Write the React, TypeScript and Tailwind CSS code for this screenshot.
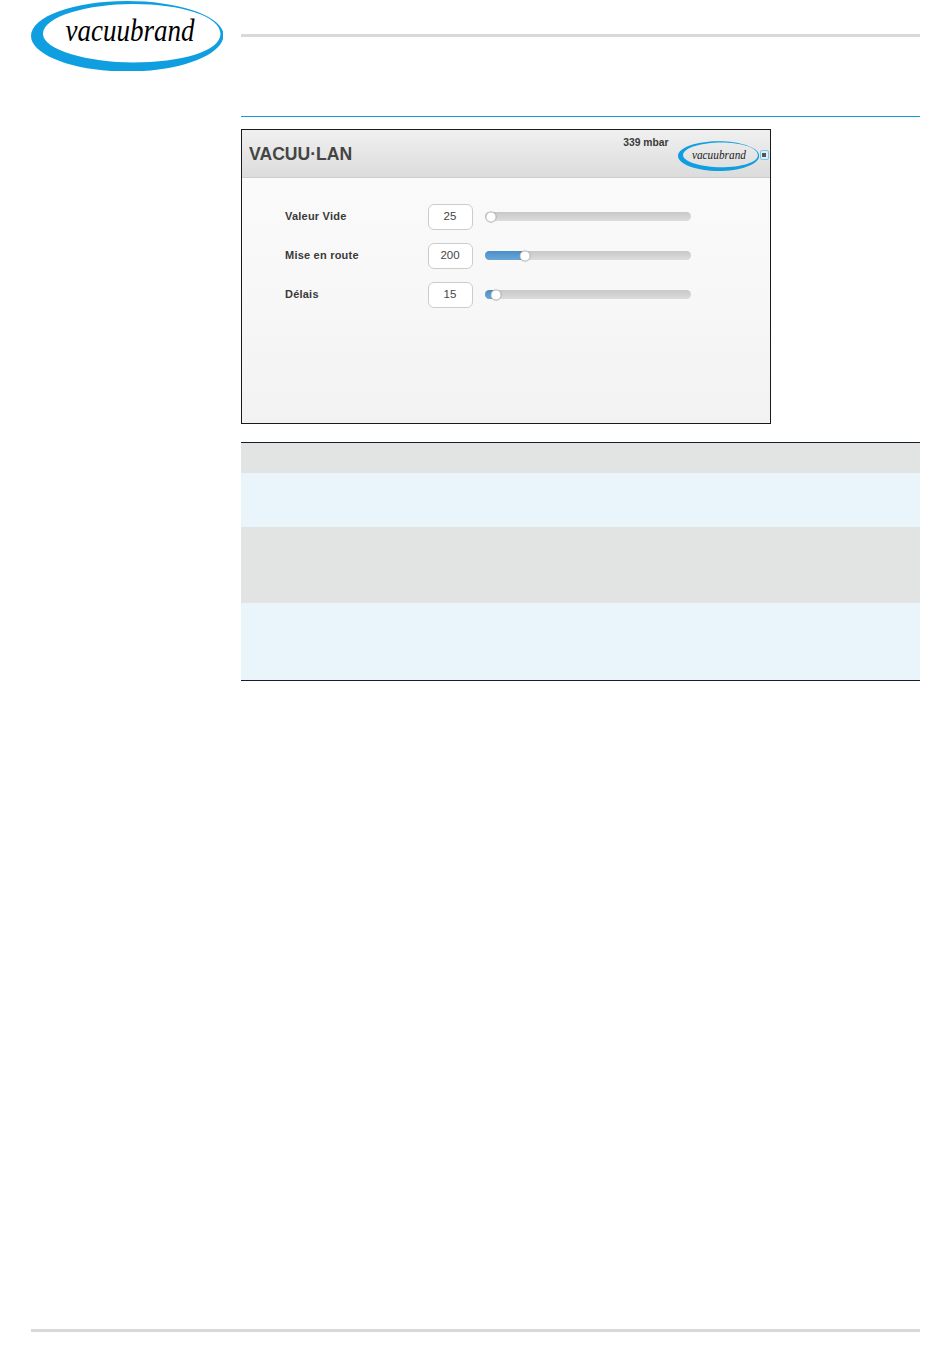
import React from "react";

const sans = "font-['Liberation_Sans',Arial,sans-serif]";

// blue ring logo, thick on the left and thin on the right
function Logo({ className, text }: { className: string; text: string }) {
  return (
    <div className={"relative shrink-0 " + className}>
      <svg viewBox="0 0 192 70" className="absolute inset-0 h-full w-full">
        <path
          fillRule="evenodd"
          fill="#0f9fe0"
          d="M96 0C149 0 192.500 15.500 192.500 34C192.500 54 149 70.500 96 70.500C43 70.500 0 54 0 35C0 15.500 43 0 96 0ZM102 3C58 3 12 15 12 33C12 49 58 61.500 102 61.500C150 61.500 189.500 50 189.500 33C189.500 15 150 3 102 3Z"
        />
      </svg>
      <span className={text}>vacuubrand</span>
    </div>
  );
}

function SliderRow({ label, value, fill, knob }: { label: string; value: string; fill: number; knob: number }) {
  return (
    <div className="flex h-[39px] items-center">
      <div className={"w-[143px] text-[11px] font-bold tracking-[0.22px] text-[#3a3a3a] " + sans}>{label}</div>
      <div className={"flex h-[26px] w-[45px] items-center justify-center rounded-[6px] border border-[#ccc] bg-white pr-px text-[11.5px] text-[#444] " + sans}>
        {value}
      </div>
      <div className="relative ml-[12px] h-[9px] w-[206px] rounded-full bg-gradient-to-b from-[#c8c8c8] to-[#dcdcdc]">
        <div className="h-full rounded-l-full bg-gradient-to-b from-[#4a8fc9] to-[#6aa6d6]" style={{ width: fill }} />
        <div
          className="absolute top-1/2 h-[11px] w-[11px] -translate-x-1/2 -translate-y-1/2 rounded-full border border-[#c4c4c4] bg-white shadow-[0_0_1px_rgba(0,0,0,0.25)]"
          style={{ left: knob }}
        />
      </div>
    </div>
  );
}

function Screenshot() {
  return (
    <div className="ml-[210px] mt-[12px] flex h-[295px] w-[530px] flex-col border border-[#1a1a1a]">
      <div className="flex h-[48px] border-b border-[#ccc] bg-gradient-to-b from-[#f0f0f0] to-[#dcdcdc]">
        <div className={"ml-[7px] mt-[14px] text-[17.6px] font-bold leading-[20px] text-[#444] " + sans}>VACUU·LAN</div>
        <div className={"ml-[271px] mt-[7px] text-[10.3px] font-bold leading-[12px] text-[#3a3a3a] " + sans}>339 mbar</div>
        <Logo
          className="ml-[9px] mt-[11px] h-[30px] w-[81px]"
          text="absolute inset-0 flex origin-center scale-x-[0.87] items-center justify-center pb-[3px] pl-px font-['Liberation_Serif',serif] text-[13px] italic text-[#222]"
        />
        <div className="ml-[1px] mt-[20px] flex h-[10px] w-[9px] items-center justify-center rounded-[2px] border border-[#7cc4e8] bg-[#d9eef8]">
          <div className="h-[4px] w-[4px] bg-[#555]" />
        </div>
      </div>
      <div className="h-[142px] bg-gradient-to-b from-[#fafafa] to-[#f7f7f7] pl-[43px] pt-[19px]">
        <SliderRow label="Valeur Vide" value="25" fill={0} knob={6} />
        <SliderRow label="Mise en route" value="200" fill={40} knob={40} />
        <SliderRow label="Délais" value="15" fill={11} knob={11} />
      </div>
      <div className="flex-1 bg-gradient-to-b from-[#f6f6f6] to-[#f2f2f2]" />
    </div>
  );
}

export default function App() {
  return (
    <div className="flex h-[1369px] w-[950px] flex-col bg-white pl-[31px] pr-[30px]">
      <div className="flex h-[117px]">
        <Logo
          className="mt-[1px] h-[70px] w-[192px]"
          text="absolute inset-0 flex origin-center scale-x-[0.87] items-center justify-center pb-[9px] pl-[7px] font-['Liberation_Serif',serif] text-[31px] italic text-black"
        />
        <div className="ml-[18px] flex flex-1 flex-col">
          <div className="mt-[34px] h-[3px] bg-[#d9d9d9]" />
          <div className="mt-[79px] h-px bg-[#0f9fe0]" />
        </div>
      </div>
      <Screenshot />
      <div className="ml-[210px] mt-[18px] border-y border-[#1a1a2a]">
        <div className="h-[30px] bg-[#e2e3e3]" />
        <div className="h-[54px] bg-[#e9f5fb]" />
        <div className="h-[76px] bg-[#e2e3e3]" />
        <div className="h-[77px] bg-[#e9f5fb]" />
      </div>
      <div className="mt-[648px] h-[3px] bg-[#d9d9d9]" />
    </div>
  );
}
